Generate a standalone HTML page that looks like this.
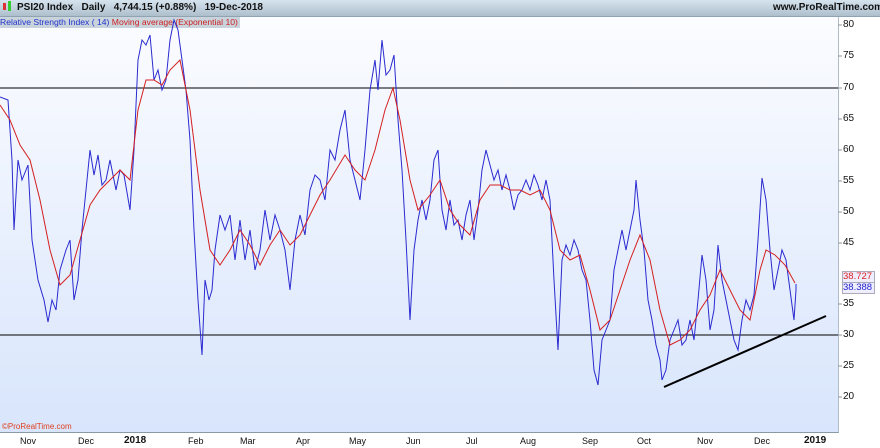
<!DOCTYPE html>
<html><head><meta charset="utf-8"><style>
body{margin:0;width:880px;height:448px;overflow:hidden;background:#fff;font-family:"Liberation Sans",sans-serif;position:relative}
.hdr{position:absolute;left:0;top:0;width:880px;height:16px;background:linear-gradient(#d5e3ee,#aebfcc);border-bottom:1px solid #8fa3b3}
.hdr b{position:absolute;top:2px;font-size:10px;color:#111}
.chart{position:absolute;left:0;top:17px;width:838px;height:415px;background:linear-gradient(#fbfcff,#d8e5fc);border-right:1px solid #b0bcc6;border-bottom:1px solid #8a99a6}
.leg{position:absolute;left:0;top:17px;height:11px;background:#c9d3dc;font-size:8.6px;line-height:11px;padding-right:2px}
.yl{position:absolute;left:843px;font-size:10px;color:#111}
.xl{position:absolute;top:436px;font-size:9px;color:#111}
.box{position:absolute;left:842px;width:31px;height:10px;font-size:9.5px;line-height:10px;border:1px solid #aab;background:#eef}
</style></head><body>
<div class="hdr"><span style="position:absolute;left:3px;top:3px;width:3px;height:7px;background:#d33"></span><span style="position:absolute;left:8px;top:1px;width:3px;height:10px;background:#3c3"></span>
<b style="left:17px">PSI20 Index&nbsp;&nbsp;&nbsp;Daily&nbsp;&nbsp;&nbsp;4,744.15 (+0.88%)&nbsp;&nbsp;&nbsp;19-Dec-2018</b>
<b style="left:773px">www.ProRealTime.com</b></div>
<div class="chart"></div>
<div class="leg"><span style="color:#2233cc">Relative Strength Index ( 14)</span> <span style="color:#cc2222">Moving average (Exponential 10)</span></div>
<svg width="880" height="448" style="position:absolute;left:0;top:0">
<line x1="0" y1="88" x2="838" y2="88" stroke="#000" stroke-width="1"/>
<line x1="0" y1="335" x2="838" y2="335" stroke="#000" stroke-width="1"/>
<g stroke="#8a99a6" stroke-width="1">
<line x1="838" y1="25" x2="842" y2="25"/><line x1="838" y1="56" x2="842" y2="56"/><line x1="838" y1="88" x2="842" y2="88"/><line x1="838" y1="119" x2="842" y2="119"/><line x1="838" y1="150" x2="842" y2="150"/><line x1="838" y1="181" x2="842" y2="181"/><line x1="838" y1="212" x2="842" y2="212"/><line x1="838" y1="243" x2="842" y2="243"/><line x1="838" y1="304" x2="842" y2="304"/><line x1="838" y1="335" x2="842" y2="335"/><line x1="838" y1="366" x2="842" y2="366"/><line x1="838" y1="397" x2="842" y2="397"/>
</g>
<polyline fill="none" stroke="#2a2ad0" stroke-width="1" points="0,97 8,100 12,160 14,230 18,160 22,180 28,165 32,240 38,280 44,300 48,322 52,300 56,310 60,270 66,250 70,240 74,300 78,280 82,230 86,190 90,150 94,175 98,155 102,185 106,180 110,160 116,190 120,170 124,175 130,210 134,150 138,60 142,40 146,45 150,35 154,80 158,70 162,90 166,80 170,40 174,20 178,30 182,60 186,90 190,140 194,230 198,300 202,355 205,280 209,300 212,290 215,250 220,215 225,230 230,215 235,260 240,220 245,260 250,230 255,270 260,250 265,210 270,240 275,215 280,230 285,250 290,290 295,240 300,215 305,235 310,190 315,175 320,180 325,200 330,150 335,160 340,130 345,110 350,160 355,180 360,200 365,150 370,90 375,60 378,90 382,40 386,75 390,70 394,55 398,120 402,170 406,240 410,320 414,250 418,220 422,200 426,220 430,200 434,160 438,150 442,210 446,230 450,200 454,225 458,220 462,240 466,215 470,200 474,240 478,210 482,170 486,150 490,165 494,180 498,170 502,190 506,175 510,190 514,210 518,195 522,190 526,180 530,190 534,175 538,185 542,200 546,180 550,200 554,280 558,350 562,260 566,245 570,255 574,240 578,250 582,270 586,280 590,320 594,370 598,385 602,340 606,330 610,320 614,270 618,250 622,230 626,250 630,230 634,210 636,180 640,220 644,250 648,300 652,320 656,345 660,360 662,380 666,370 670,340 674,330 678,320 682,345 686,340 690,320 694,340 698,300 702,255 706,280 710,330 714,310 718,245 722,280 726,300 730,320 734,340 738,350 742,320 746,300 750,310 754,295 758,240 762,178 766,200 770,250 774,290 778,270 782,250 786,260 790,290 794,320 796,290 796,284"/>
<polyline fill="none" stroke="#d42020" stroke-width="1" points="0,105 10,120 20,145 30,160 40,200 50,250 60,285 70,275 80,240 90,205 100,190 110,180 120,170 130,180 138,110 146,80 154,80 162,85 170,70 180,60 190,110 200,190 210,250 220,265 230,250 240,230 250,245 260,265 270,245 280,230 290,245 300,235 310,215 320,195 330,180 345,155 355,170 365,180 375,150 385,110 393,88 400,120 410,180 418,210 430,195 440,180 450,210 460,225 470,235 480,200 490,185 500,185 510,190 520,190 530,195 540,190 550,210 560,250 570,260 580,255 590,290 600,330 610,320 620,290 630,260 640,235 650,260 660,310 670,345 680,340 690,330 700,310 710,295 720,270 730,290 740,310 750,320 760,270 766,250 775,255 785,265 795,283"/>
<line x1="664" y1="387" x2="826" y2="316" stroke="#000" stroke-width="2"/>
</svg>
<div class="yl" style="top:19px">80</div><div class="yl" style="top:50px">75</div><div class="yl" style="top:82px">70</div><div class="yl" style="top:113px">65</div><div class="yl" style="top:144px">60</div><div class="yl" style="top:175px">55</div><div class="yl" style="top:206px">50</div><div class="yl" style="top:237px">45</div><div class="yl" style="top:298px">35</div><div class="yl" style="top:329px">30</div><div class="yl" style="top:360px">25</div><div class="yl" style="top:391px">20</div>
<div class="box" style="top:271px;color:#d22">38.727</div><div class="box" style="top:282px;color:#22c">38.388</div>
<div style="position:absolute;left:2px;top:422px;font-size:8px;color:#e04020">©ProRealTime.com</div>
<div class="xl" style="left:20px">Nov</div><div class="xl" style="left:78px">Dec</div><div class="xl" style="left:124px;font-weight:bold;font-size:10px;top:435px">2018</div><div class="xl" style="left:188px">Feb</div><div class="xl" style="left:240px">Mar</div><div class="xl" style="left:296px">Apr</div><div class="xl" style="left:349px">May</div><div class="xl" style="left:406px">Jun</div><div class="xl" style="left:466px">Jul</div><div class="xl" style="left:520px">Aug</div><div class="xl" style="left:582px">Sep</div><div class="xl" style="left:637px">Oct</div><div class="xl" style="left:697px">Nov</div><div class="xl" style="left:754px">Dec</div><div class="xl" style="left:804px;font-weight:bold;font-size:10px;top:435px">2019</div>
</body></html>
